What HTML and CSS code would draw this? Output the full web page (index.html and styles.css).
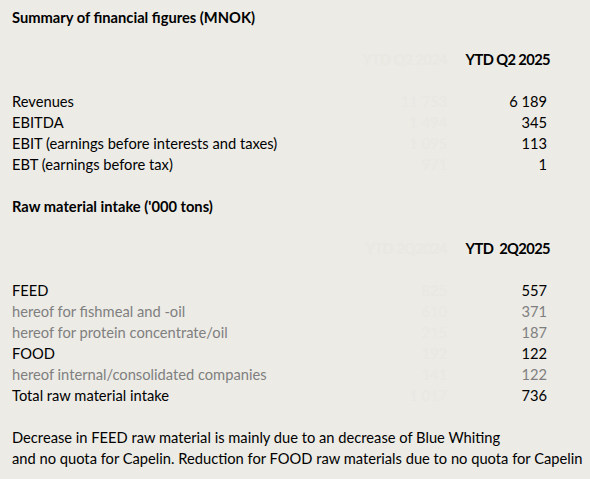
FILE: index.html
```html
<!DOCTYPE html>
<html lang="en">
<head>
<meta charset="utf-8">
<title>Summary of financial figures</title>
<link rel="stylesheet" href="styles.css">
</head>
<body>
<div class="sheet">
  <h1 class="title">Summary of financial figures (MNOK)</h1>
  <div class="table gap">
    <div class="row head">
      <span class="label"></span>
      <span class="ghost">YTD Q2 2024</span>
      <span class="value">YTD Q2 2025</span>
    </div>
    <div class="row gap">
      <span class="label">Revenues</span>
      <span class="ghost">11 753</span>
      <span class="value num">6 189</span>
    </div>
    <div class="row">
      <span class="label">EBITDA</span>
      <span class="ghost">1 494</span>
      <span class="value num">345</span>
    </div>
    <div class="row">
      <span class="label">EBIT (earnings before interests and taxes)</span>
      <span class="ghost">1 095</span>
      <span class="value num">113</span>
    </div>
    <div class="row">
      <span class="label">EBT (earnings before tax)</span>
      <span class="ghost">971</span>
      <span class="value num">1</span>
    </div>
  </div>

  <h2 class="title gap">Raw material intake ('000 tons)</h2>
  <div class="table gap">
    <div class="row head">
      <span class="label"></span>
      <span class="ghost">YTD 2Q2024</span>
      <span class="value">YTD&nbsp; 2Q2025</span>
    </div>
    <div class="row gap">
      <span class="label">FEED</span>
      <span class="ghost">825</span>
      <span class="value num">557</span>
    </div>
    <div class="row sub">
      <span class="label">hereof for fishmeal and -oil</span>
      <span class="ghost">610</span>
      <span class="value num">371</span>
    </div>
    <div class="row sub">
      <span class="label">hereof for protein concentrate/oil</span>
      <span class="ghost">215</span>
      <span class="value num">187</span>
    </div>
    <div class="row">
      <span class="label">FOOD</span>
      <span class="ghost">192</span>
      <span class="value num">122</span>
    </div>
    <div class="row sub">
      <span class="label">hereof internal/consolidated companies</span>
      <span class="ghost">141</span>
      <span class="value num">122</span>
    </div>
    <div class="row">
      <span class="label">Total raw material intake</span>
      <span class="ghost">1 017</span>
      <span class="value num">736</span>
    </div>
  </div>

  <p class="note gap">Decrease in FEED raw material is mainly due to an decrease of Blue Whiting<br>and no quota for Capelin. Reduction for FOOD raw materials due to no quota for Capelin</p>
</div>
</body>
</html>
```

FILE: styles.css
```css
html, body {
  margin: 0;
  padding: 0;
  background: #ecebe6;
}

body {
  font-family: Lato, "Open Sans", "Liberation Sans", sans-serif;
  font-size: 14.7px;
  color: #000;
}

.sheet {
  padding: 7px 40px 0 12px;
}

.title {
  margin: 0;
  font-size: 14.7px;
  font-weight: bold;
  line-height: 21px;
}

.gap {
  margin-top: 21px;
}

.table {
  display: flex;
  flex-direction: column;
}

.row {
  display: grid;
  grid-template-columns: 1fr 90px 103px;
  height: 21px;
  line-height: 21px;
  white-space: nowrap;
}

.row.head {
  font-weight: bold;
  letter-spacing: -0.6px;
}

.ghost {
  text-align: right;
  color: #e9e8e3;
}

.value {
  text-align: right;
}

.value.num {
  padding-right: 3px;
}

.row.sub {
  color: #7f7f7f;
}

.note {
  margin-bottom: 0;
  line-height: 21px;
  white-space: nowrap;
}
```
